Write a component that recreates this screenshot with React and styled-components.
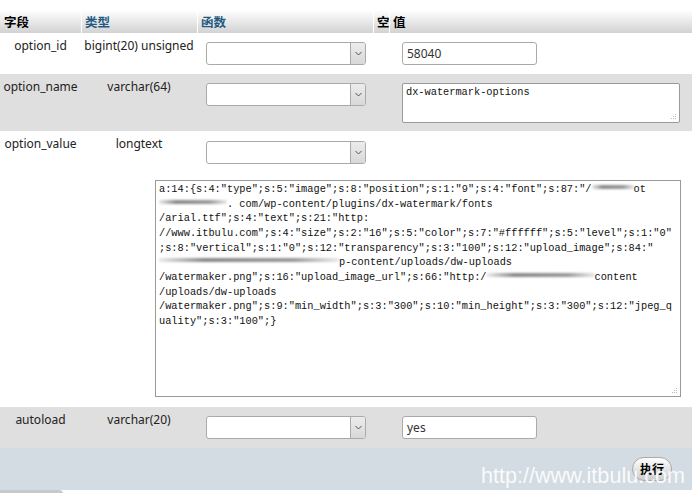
import React from 'react'
import styled, { createGlobalStyle } from 'styled-components'

const GlobalStyle = createGlobalStyle`
  html, body {
    margin: 0;
    padding: 0;
    background: #fff;
  }
  body {
    font-family: 'Noto Sans', 'Noto Sans CJK SC', sans-serif;
    font-size: 12px;
    color: #222;
  }
`

const COLS = '81px 116px 176px 16px 1fr'

const Page = styled.div`
  width: 692px;
  padding-top: 10px;
  position: relative;
`

const HeadRow = styled.div`
  display: grid;
  grid-template-columns: ${COLS};
  height: 23px;
  background: linear-gradient(#ffffff, #d2d2d2);
`

const HeadCell = styled.div`
  font-family: 'Noto Sans CJK SC', sans-serif;
  font-weight: 700;
  font-size: 12.5px;
  line-height: 23px;
  padding-left: ${p => (p.$first ? '4px' : '3px')};
  color: ${p => (p.$link ? '#235a81' : '#000')};
  border-left: ${p => (p.$first ? 'none' : '1px solid #fff')};
`

const Row = styled.div`
  display: grid;
  grid-template-columns: ${COLS};
  align-items: start;
  padding: 5px 0 ${p => p.$bottom || '9px'};
  background: ${p => (p.$alt ? '#dfdfdf' : '#fff')};
`

const Label = styled.div`
  text-align: center;
  line-height: 16px;
  font-size: 12px;
  color: #222;
  white-space: nowrap;
`

const Control = styled.div`
  padding-top: ${p => p.$top || '4px'};
  padding-left: ${p => p.$left || '0'};
`

const Select = styled.div`
  width: 160px;
  height: 23px;
  box-sizing: border-box;
  border: 1px solid #aaa;
  border-radius: 3px;
  background: #fff;
  display: flex;
  justify-content: flex-end;
  overflow: hidden;
`

const Arrow = styled.div`
  width: 14px;
  height: 100%;
  border-left: 1px solid #aaa;
  background: linear-gradient(#ececec, #d8d8d8);
  display: flex;
  align-items: center;
  justify-content: center;
`

const ValueInput = styled.div`
  width: 135px;
  height: 23px;
  box-sizing: border-box;
  border: 1px solid #aaa;
  border-radius: 3px;
  background: #fff;
  padding-left: 4px;
  font-size: 12px;
  line-height: 21px;
  color: #333;
`

const TextBox = styled.div`
  position: relative;
  box-sizing: border-box;
  width: ${p => p.$w};
  height: ${p => p.$h};
  border: 1px solid #9a9a9a;
  border-radius: ${p => (p.$round ? '2px' : '0')};
  background: #fff;
  padding: ${p => p.$pad || '2px 3px'};
  font-family: 'Liberation Mono', 'DejaVu Sans Mono', monospace;
  font-size: 10.3px;
  line-height: 14.65px;
  color: #111;
  white-space: pre;
  overflow: hidden;
`

const WideBox = styled.div`
  grid-column: 1 / -1;
  margin: 16px 0 0 155px;
`

const Blur = styled.span`
  display: inline-block;
  width: ${p => p.$w}px;
  height: 4px;
  vertical-align: 3px;
  background: linear-gradient(90deg, rgba(150, 150, 150, 0.2), #8a8a8a 25%, #9a9a9a 75%, rgba(150, 150, 150, 0.2));
  filter: blur(1.3px);
`

const Grip = styled.svg`
  position: absolute;
  right: 2px;
  bottom: 2px;
`

const Footer = styled.div`
  height: 42px;
  background: #d3dce3;
  display: flex;
  justify-content: flex-end;
  align-items: flex-start;
  padding: 9px 20px 0 0;
  box-sizing: border-box;
  position: relative;
`

const Button = styled.div`
  width: 40px;
  height: 24px;
  box-sizing: border-box;
  border: 1px solid #aaa;
  border-radius: 12px;
  background: linear-gradient(#ffffff, #cccccc);
  font-family: 'Noto Sans CJK SC', sans-serif;
  font-weight: 700;
  font-size: 12px;
  line-height: 22px;
  text-align: center;
  color: #000;
`

const Watermark = styled.div`
  position: absolute;
  right: 7px;
  top: 15px;
  font-family: 'Liberation Sans', Arial, sans-serif;
  font-size: 21.6px;
  line-height: 26px;
  color: rgba(255, 255, 255, 0.9);
  pointer-events: none;
`

const BottomTab = styled.div`
  width: 63px;
  height: 4px;
  background: #c9c9c9;
  border-top-right-radius: 4px;
`

function Chevron() {
  return (
    <svg width="7" height="5" viewBox="0 0 7 5">
      <path d="M0.5 1 L3.5 4 L6.5 1" fill="none" stroke="#555" strokeWidth="1" />
    </svg>
  )
}

function DropDown() {
  return (
    <Select>
      <Arrow>
        <Chevron />
      </Arrow>
    </Select>
  )
}

function ResizeGrip() {
  return (
    <Grip width="6" height="6" viewBox="0 0 6 6">
      <rect x="4" y="0" width="1" height="1" fill="#bbb" />
      <rect x="2" y="2" width="1" height="1" fill="#bbb" />
      <rect x="4" y="2" width="1" height="1" fill="#bbb" />
      <rect x="0" y="4" width="1" height="1" fill="#bbb" />
      <rect x="2" y="4" width="1" height="1" fill="#bbb" />
      <rect x="4" y="4" width="1" height="1" fill="#bbb" />
    </Grip>
  )
}

export default function App() {
  return (
    <>
      <GlobalStyle />
      <Page>
        <HeadRow>
          <HeadCell $first>字段</HeadCell>
          <HeadCell $link>类型</HeadCell>
          <HeadCell $link>函数</HeadCell>
          <HeadCell>空</HeadCell>
          <HeadCell>值</HeadCell>
        </HeadRow>

        <Row>
          <Label>option_id</Label>
          <Label>bigint(20) unsigned</Label>
          <Control $left="9px">
            <DropDown />
          </Control>
          <div />
          <Control $left="13px">
            <ValueInput>58040</ValueInput>
          </Control>
        </Row>

        <Row $alt $bottom="8px">
          <Label>option_name</Label>
          <Label>varchar(64)</Label>
          <Control $left="9px">
            <DropDown />
          </Control>
          <div />
          <Control $left="13px">
            <TextBox $w="278px" $h="40px" $round $pad="1px 3px">
              dx-watermark-options
              <ResizeGrip />
            </TextBox>
          </Control>
        </Row>

        <Row $bottom="10px">
          <Label>option_value</Label>
          <Label>longtext</Label>
          <Control $left="9px" $top="5px">
            <DropDown />
          </Control>
          <div />
          <div />
          <WideBox>
            <TextBox $w="526px" $h="217px" $pad="1px 3px 0">
              {'a:14:{s:4:"type";s:5:"image";s:8:"position";s:1:"9";s:4:"font";s:87:"/'}
              <Blur $w={42} />
              {'ot\n'}
              <Blur $w={68} />
              {'. com/wp-content/plugins/dx-watermark/fonts\n'}
              {'/arial.ttf";s:4:"text";s:21:"http:\n'}
              {'//www.itbulu.com";s:4:"size";s:2:"16";s:5:"color";s:7:"#ffffff";s:5:"level";s:1:"0"\n'}
              {';s:8:"vertical";s:1:"0";s:12:"transparency";s:3:"100";s:12:"upload_image";s:84:"\n'}
              <Blur $w={180} />
              {'p-content/uploads/dw-uploads\n'}
              {'/watermaker.png";s:16:"upload_image_url";s:66:"http:/'}
              <Blur $w={108} />
              {'content\n'}
              {'/uploads/dw-uploads\n'}
              {'/watermaker.png";s:9:"min_width";s:3:"300";s:10:"min_height";s:3:"300";s:12:"jpeg_q\n'}
              {'uality";s:3:"100";}'}
              <ResizeGrip />
            </TextBox>
          </WideBox>
        </Row>

        <Row $alt>
          <Label>autoload</Label>
          <Label>varchar(20)</Label>
          <Control $left="9px">
            <DropDown />
          </Control>
          <div />
          <Control $left="13px">
            <ValueInput>yes</ValueInput>
          </Control>
        </Row>

        <Footer>
          <Button>执行</Button>
          <Watermark>http://www.itbulu.com</Watermark>
        </Footer>
        <BottomTab />
      </Page>
    </>
  )
}
